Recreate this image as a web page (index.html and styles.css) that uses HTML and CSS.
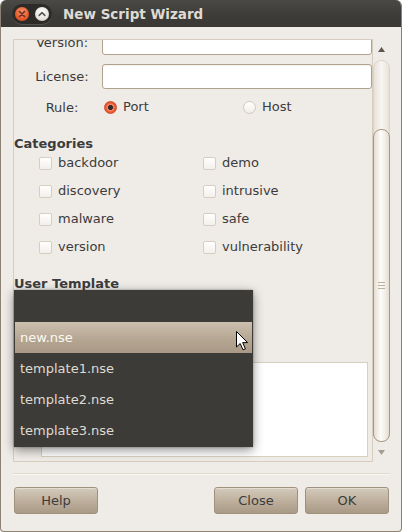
FILE: index.html
```html
<!DOCTYPE html>
<html lang="en">
<head>
<meta charset="UTF-8" />
<title>New Script Wizard</title>
<link rel="stylesheet" href="styles.css">
</head>
<body>
  <div class="window">
    <div class="titlebar">
      <div class="controls">
        <span class="ctl ctl-close">
          <svg width="14" height="14" viewBox="0 0 14 14"><path d="M4.5 4.5 L9.5 9.5 M9.5 4.5 L4.5 9.5" stroke="#6b3020" stroke-width="1.6" stroke-linecap="round"/></svg>
        </span>
        <span class="ctl ctl-max">
          <svg width="14" height="14" viewBox="0 0 14 14"><path d="M4.2 8.4 L7 5.6 L9.8 8.4" fill="none" stroke="#5a5650" stroke-width="1.6" stroke-linecap="round" stroke-linejoin="round"/></svg>
        </span>
      </div>
      <span class="title">New Script Wizard</span>
    </div>

    <div class="body">
      <div class="scrolled">
        <div class="viewport">
          <div class="form">
            <div class="field">
              <label>Version:</label>
              <div class="entry"></div>
            </div>
            <div class="field">
              <label>License:</label>
              <div class="entry"></div>
            </div>
            <div class="field field-rule">
              <label>Rule:</label>
              <div class="radios">
                <span class="option"><span class="radio checked"></span>Port</span>
                <span class="option"><span class="radio"></span>Host</span>
              </div>
            </div>

            <h2 class="section">Categories</h2>
            <div class="checks">
              <span class="option"><span class="check"></span>backdoor</span>
              <span class="option"><span class="check"></span>demo</span>
              <span class="option"><span class="check"></span>discovery</span>
              <span class="option"><span class="check"></span>intrusive</span>
              <span class="option"><span class="check"></span>malware</span>
              <span class="option"><span class="check"></span>safe</span>
              <span class="option"><span class="check"></span>version</span>
              <span class="option"><span class="check"></span>vulnerability</span>
            </div>

            <h2 class="section section-template">User Template</h2>
            <div class="combo">new.nse</div>
            <div class="textarea"></div>
          </div>
        </div>
        <div class="scrollbar">
          <div class="stepper">
            <svg width="7" height="5" viewBox="0 0 7 5"><path d="M0 5 L3.5 0 L7 5 Z" fill="#5c574f"/></svg>
          </div>
          <div class="trough">
            <div class="slider"><span class="grip"></span></div>
          </div>
          <div class="stepper">
            <svg width="7" height="5" viewBox="0 0 7 5"><path d="M0 0 L3.5 5 L7 0 Z" fill="#a59d92"/></svg>
          </div>
        </div>
      </div>

      <div class="separator"></div>

      <div class="buttons">
        <button class="btn">Help</button>
        <span class="spacer"></span>
        <button class="btn">Close</button>
        <button class="btn">OK</button>
      </div>
    </div>

    <ul class="menu">
      <li class="item blank"></li>
      <li class="item active">new.nse</li>
      <li class="item">template1.nse</li>
      <li class="item">template2.nse</li>
      <li class="item">template3.nse</li>
    </ul>

    <svg class="cursor" width="14" height="22" viewBox="0 0 14 22">
      <path d="M1.5 1.5 L1.5 17 L5.2 13.5 L8 19.8 L10.4 18.8 L7.7 12.6 L12.6 12.6 Z" fill="#fff" stroke="#000" stroke-width="1" stroke-linejoin="round"/>
    </svg>
  </div>
</body>
</html>
```

FILE: styles.css
```css
html, body {
  margin: 0;
  background: #ffffff;
}
body {
  font-family: 'DejaVu Sans', 'Liberation Sans', sans-serif;
  font-size: 13px;
  color: #3c3c3c;
}
.window {
  position: relative;
  width: 400px;
  height: 531px;
  background: #efebe7;
  border: 1px solid #8c8274;
  border-top: none;
  border-radius: 6px 6px 4px 4px;
  overflow: hidden;
}

/* title bar */
.titlebar {
  height: 27px;
  display: flex;
  align-items: center;
  background: linear-gradient(#4b4945, #3c3b37 60%, #3a3935);
  margin: 0 -1px;
}
.controls {
  display: flex;
  gap: 6px;
  margin-left: 12px;
  padding: 3px;
  border-radius: 10px;
  background: #2c2b28;
  box-shadow: 0 1px 0 rgba(255,255,255,0.12);
}
.ctl {
  width: 14px;
  height: 14px;
  border-radius: 50%;
  display: flex;
}
.ctl-close {
  background: radial-gradient(circle at 50% 35%, #f7936a, #e65a2c 60%, #c9441c);
}
.ctl-max {
  background: radial-gradient(circle at 50% 35%, #ffffff, #e7e4df 60%, #bcb8b0);
}
.title {
  margin-left: 11px;
  font-weight: bold;
  font-size: 13.5px;
  color: #dfdbd2;
}

/* body */
.body {
  padding: 12px 11px 17px 12px;
}
.scrolled {
  display: flex;
  height: 423px;
}
.viewport {
  flex: 1;
  border: 1px solid #d6cdbe;
  overflow: hidden;
}
.form {
  margin-top: -10px;
}
.field {
  display: grid;
  grid-template-columns: 88px 1fr;
  align-items: center;
  margin-bottom: 9px;
}
.field label {
  padding-left: 8px;
  text-align: center;
}
.entry {
  height: 23px;
  background: #fff;
  border: 1px solid #b0a28c;
  border-radius: 3px;
  box-shadow: inset 0 1px 1px rgba(0,0,0,0.06);
}
.field-rule {
  height: 24px;
  margin-top: -3px;
  margin-bottom: 0;
}
.radios {
  display: grid;
  grid-template-columns: 139px auto;
  padding-left: 2px;
}
.option {
  display: flex;
  align-items: center;
  gap: 6px;
  line-height: 20px;
}
.radio {
  width: 11px;
  height: 11px;
  border-radius: 50%;
  border: 1px solid #d2c9bb;
  background: linear-gradient(#ffffff, #f1eee9);
}
.radio.checked {
  border-color: #cf4c28;
  background: radial-gradient(circle, #2f2d2a 0 2.2px, #f58160 2.8px 3.5px, #e9592f 4.5px);
}
.section {
  margin: 17px 0 1px;
  font-size: 13px;
  font-weight: bold;
  line-height: 16px;
  color: #3c3c3c;
}
.section-template {
  margin-top: 19px;
}
.checks {
  display: grid;
  grid-template-columns: 164px auto;
  row-gap: 8px;
  padding-left: 25px;
}
.check {
  width: 11px;
  height: 11px;
  border: 1px solid #d6cec1;
  border-radius: 2px;
  background: linear-gradient(#ffffff, #f3f0eb);
}
.combo {
  margin: 6px 0 0 27px;
  width: 200px;
  height: 28px;
}
.textarea {
  margin: 36px 4px 0 27px;
  height: 93px;
  background: #fff;
  border: 1px solid #d9cfbf;
}

/* scrollbar */
.scrollbar {
  width: 17px;
  display: flex;
  flex-direction: column;
}
.stepper {
  height: 21px;
  display: flex;
  align-items: center;
  justify-content: center;
}
.stepper:last-child {
  height: 20px;
}
.trough {
  flex: 1;
  display: flex;
  flex-direction: column;
  border: 1px solid #dcd4c8;
  border-radius: 8px;
  background: linear-gradient(to right, #e7e1d8, #f8f6f3 50%, #e7e1d8);
}
.slider {
  flex: 1;
  margin: 68px -1px -1px;
  display: flex;
  align-items: center;
  justify-content: center;
  border: 1px solid #a89983;
  border-radius: 8px;
  background: linear-gradient(to right, #e4ddd2, #fdfcfa 45%, #f3efe9 70%, #e4ddd2);
}
.grip {
  width: 7px;
  height: 7px;
  background: repeating-linear-gradient(#bcb19f 0 1px, transparent 1px 3px);
}

/* separator and buttons */
.separator {
  margin-top: 11px;
  height: 1px;
  background: #e2dbd0;
  box-shadow: 0 1px 0 #f8f6f3;
}
.buttons {
  display: flex;
  gap: 7px;
  margin-top: 13px;
  padding: 0 1px;
}
.spacer {
  flex: 1;
}
.btn {
  width: 84px;
  height: 27px;
  font-family: inherit;
  font-size: 13px;
  color: #3c3c3c;
  border: 1px solid #9f917d;
  border-radius: 3px;
  background: linear-gradient(#d4cabb, #bcae9b 55%, #a99a86);
  box-shadow: inset 0 1px 0 rgba(255,255,255,0.35);
  padding: 0;
}

/* popup menu */
.menu {
  position: absolute;
  left: 13px;
  top: 290px;
  width: 237px;
  margin: 0;
  padding: 1px;
  list-style: none;
  background: #3c3b37;
  border: 0;
  box-shadow: 0 3px 10px rgba(0,0,0,0.45), 0 0 2px rgba(0,0,0,0.3);
}
.item {
  height: 31px;
  line-height: 31px;
  padding-left: 5px;
  color: #dfdbd2;
}
.item.active {
  color: #fbf9f5;
  background: linear-gradient(#cbbfae, #b4a591 60%, #a89885);
}
.cursor {
  position: absolute;
  left: 234px;
  top: 330px;
}
```
